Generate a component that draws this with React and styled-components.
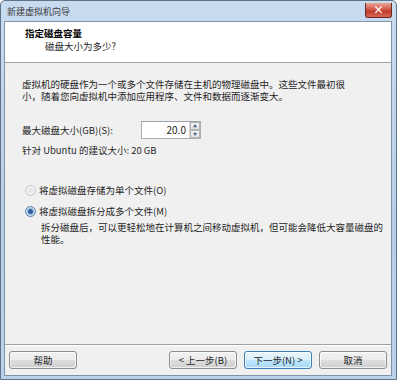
import React, { useState } from 'react';
import styled, { createGlobalStyle } from 'styled-components';

const GlobalStyle = createGlobalStyle`
  html, body {
    margin: 0;
    padding: 0;
    background: #ffffff;
  }
  body {
    font-family: "Noto Sans CJK SC", "Noto Sans", sans-serif;
  }
`;

const Window = styled.div`
  width: 397px;
  height: 380px;
  box-sizing: border-box;
  display: flex;
  flex-direction: column;
  border: 1px solid #5f7488;
  border-radius: 5px 5px 0 0;
  background: linear-gradient(180deg, #c9dbef 0%, #b8cde6 60%, #bcd1ea 100%);
  padding: 0 4px 3px 3px;
  font-size: 9.5px;
  color: #1e1e1e;
`;

const TitleBar = styled.div`
  height: 20px;
  display: flex;
  align-items: center;
  justify-content: space-between;
  padding-left: 3px;
  color: #3a3a3a;
  font-size: 9px;
`;

const CloseButton = styled.div`
  width: 25px;
  height: 14px;
  margin-top: -2px;
  border: 1px solid #6b2a25;
  border-top: none;
  border-radius: 0 0 3px 3px;
  background: linear-gradient(180deg, #e5a695 0%, #d3574a 45%, #c0392b 60%, #d56a55 100%);
  color: #ffffff;
  display: flex;
  align-items: center;
  justify-content: center;
  font-size: 11px;
  font-weight: bold;
  line-height: 1;
`;

const Client = styled.div`
  flex: 1;
  display: flex;
  flex-direction: column;
  border: 1px solid #8193a8;
  background: #f0f0f0;
`;

const Header = styled.div`
  height: 41px;
  background: #ffffff;
  border-bottom: 1px solid #a0a0a0;
  padding: 5px 0 0 20px;
  box-sizing: border-box;
`;

const HeaderTitle = styled.div`
  font-weight: bold;
  line-height: 12px;
  color: #000;
`;

const HeaderSub = styled.div`
  padding-left: 20px;
  margin-top: 1px;
  line-height: 12px;
`;

const Body = styled.div`
  flex: 1;
  padding: 15px 0 0 17px;
  display: flex;
  flex-direction: column;
`;

const Paragraph = styled.p`
  margin: 0;
  width: 330px;
  line-height: 12px;
`;

const SizeRow = styled.div`
  display: flex;
  align-items: center;
  margin-top: 19px;
  height: 18px;
`;

const Label = styled.span`
  width: 119px;
`;

const SpinBox = styled.div`
  display: flex;
  height: 18px;
  width: 60px;
  border: 1px solid #abadb3;
  border-top-color: #9ea3ab;
  box-sizing: border-box;
  background: #ffffff;
`;

const SpinValue = styled.div`
  flex: 1;
  text-align: right;
  padding-right: 3px;
  line-height: 16px;
  font-size: 10px;
`;

const SpinArrows = styled.div`
  width: 10px;
  display: flex;
  flex-direction: column;
  border-left: 1px solid #d5d5d5;
`;

const Arrow = styled.div`
  flex: 1;
  display: flex;
  align-items: center;
  justify-content: center;
  background: linear-gradient(180deg, #f4f4f4, #e2e2e2);
  border: 1px solid #b5b5b5;
  font-size: 4px;
  color: #4d6185;
`;

const Hint = styled.div`
  margin-top: 5px;
  line-height: 12px;
  color: #2a2a2a;
`;

const RadioGroup = styled.div`
  margin-top: 28px;
  display: flex;
  flex-direction: column;
  gap: 9px;
`;

const RadioRow = styled.label`
  display: flex;
  align-items: center;
  gap: 3px;
  line-height: 12px;
  color: #1e1e1e;
`;

const RadioDot = styled.span`
  width: 9px;
  height: 9px;
  border-radius: 50%;
  border: 1px solid ${(p) => (p.$checked ? '#5a7fa8' : '#c8c8c8')};
  background: ${(p) =>
    p.$checked
      ? 'radial-gradient(circle, #2f5f9a 0 2px, #9fc0e3 3px, #eef3f8 5px)'
      : 'radial-gradient(circle, #e8e8e8 0 2px, #f6f6f6 5px)'};
  margin-left: 3px;
`;

const Note = styled.p`
  margin: 4px 0 0 19px;
  width: 345px;
  line-height: 12px;
`;

const Footer = styled.div`
  height: 30px;
  border-top: 1px solid #a0a0a0;
  box-shadow: inset 0 1px 0 #ffffff;
  display: flex;
  align-items: center;
  padding: 0 4px 0 4px;
  gap: 7px;
`;

const Button = styled.button`
  width: 68px;
  height: 18px;
  box-sizing: border-box;
  padding: 0;
  border-radius: 3px;
  font-family: inherit;
  font-size: 9.5px;
  color: #1e1e1e;
  border: 1px solid ${(p) => (p.$primary ? '#3c7fb1' : '#8d8d8d')};
  background: ${(p) =>
    p.$primary
      ? 'linear-gradient(180deg, #eaf6fd 0%, #d9f0fc 50%, #bee6fd 51%, #a7d9f5 100%)'
      : 'linear-gradient(180deg, #f2f2f2 0%, #ebebeb 50%, #dddddd 51%, #cfcfcf 100%)'};
  box-shadow: inset 0 0 0 1px rgba(255, 255, 255, 0.7);
`;

const Spacer = styled.div`
  flex: 1;
`;

export default function App() {
  const [mode, setMode] = useState('multi');

  return (
    <>
      <GlobalStyle />
      <Window>
        <TitleBar>
          <span>新建虚拟机向导</span>
          <CloseButton>×</CloseButton>
        </TitleBar>
        <Client>
          <Header>
            <HeaderTitle>指定磁盘容量</HeaderTitle>
            <HeaderSub>磁盘大小为多少?</HeaderSub>
          </Header>
          <Body>
            <Paragraph>
              虚拟机的硬盘作为一个或多个文件存储在主机的物理磁盘中。这些文件最初很小，随着您向虚拟机中添加应用程序、文件和数据而逐渐变大。
            </Paragraph>
            <SizeRow>
              <Label>最大磁盘大小(GB)(S):</Label>
              <SpinBox>
                <SpinValue>20.0</SpinValue>
                <SpinArrows>
                  <Arrow>▲</Arrow>
                  <Arrow>▼</Arrow>
                </SpinArrows>
              </SpinBox>
            </SizeRow>
            <Hint>针对 Ubuntu 的建议大小: 20 GB</Hint>
            <RadioGroup>
              <RadioRow onClick={() => setMode('single')}>
                <RadioDot $checked={mode === 'single'} />
                将虚拟磁盘存储为单个文件(O)
              </RadioRow>
              <RadioRow onClick={() => setMode('multi')}>
                <RadioDot $checked={mode === 'multi'} />
                将虚拟磁盘拆分成多个文件(M)
              </RadioRow>
            </RadioGroup>
            <Note>
              拆分磁盘后，可以更轻松地在计算机之间移动虚拟机，但可能会降低大容量磁盘的性能。
            </Note>
          </Body>
          <Footer>
            <Button>帮助</Button>
            <Spacer />
            <Button>&lt; 上一步(B)</Button>
            <Button $primary>下一步(N) &gt;</Button>
            <Button>取消</Button>
          </Footer>
        </Client>
      </Window>
    </>
  );
}
